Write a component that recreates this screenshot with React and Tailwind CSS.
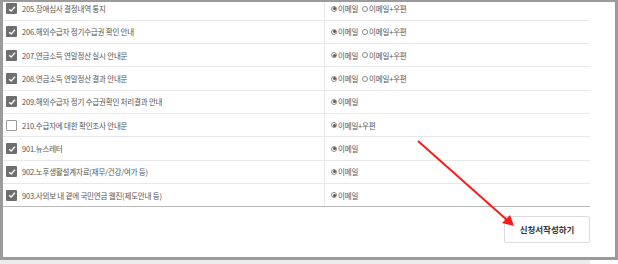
import React from "react";

const rows = [
  { code: "205.장애심사 결정내역 통지", checked: true, both: true },
  { code: "206.해외수급자 정기수급권 확인 안내", checked: true, both: true },
  { code: "207.연금소득 연말정산 실시 안내문", checked: true, both: true },
  { code: "208.연금소득 연말정산 결과 안내문", checked: true, both: true },
  { code: "209.해외수급자 정기 수급권확인 처리결과 안내", checked: true, only: "이메일" },
  { code: "210.수급자에 대한 확인조사 안내문", checked: false, only: "이메일+우편" },
  { code: "901.뉴스레터", checked: true, only: "이메일" },
  { code: "902.노후생활설계자료(재무/건강/여가 등)", checked: true, only: "이메일" },
  { code: "903.사외보 내 곁에 국민연금 웹진(제도안내 등)", checked: true, only: "이메일" },
];

function CheckBox({ checked }) {
  if (!checked) {
    return <span className="w-[11px] h-[11px] shrink-0 rounded-[1px] border border-[#9a9a9a] bg-white" />;
  }
  return (
    <span className="w-[11px] h-[11px] shrink-0 rounded-[1px] bg-[#6e6e6e] flex items-center justify-center">
      <svg width="8" height="8" viewBox="0 0 8 8">
        <path d="M1.2 4.2 L3.2 6.1 L6.9 1.8" fill="none" stroke="#fff" strokeWidth="1.4" />
      </svg>
    </span>
  );
}

function Radio({ on, label }) {
  return (
    <span className="inline-flex items-center">
      <span className="w-[6px] h-[6px] rounded-full border border-[#8a8a8a] bg-white flex items-center justify-center mr-[1px]">
        {on && <span className="w-[3px] h-[3px] rounded-full bg-[#555]" />}
      </span>
      {label}
    </span>
  );
}

export default function App() {
  return (
    <div className="w-[618px] h-[264px] bg-white overflow-hidden relative" style={{ fontFamily: '"Noto Sans CJK KR", "Noto Sans", sans-serif' }}>
      <div className="h-[260px] border-t-2 border-l-[3px] border-r-[3px] border-b-[3px] border-[#9b9b9b] overflow-hidden">
        <div className="w-[587px] -mt-[4.6px]">
          {rows.map((r, i) => (
            <div key={i} className={`flex h-[23.33px] border-b ${i === rows.length - 1 ? "border-[#b8b8b8]" : "border-[#e8e8e8]"}`}>
              <div className="w-[321px] flex items-center pl-[3px] gap-[5px] text-[7.5px] text-[#555] tracking-[-0.2px]">
                <CheckBox checked={r.checked} />
                <span>{r.code}</span>
              </div>
              <div className="flex-1 border-l border-[#e8e8e8] flex items-center pl-[6px] gap-[4px] text-[7.5px] text-[#555] tracking-[-0.2px]">
                {r.both ? (
                  <>
                    <Radio on label="이메일" />
                    <Radio label="이메일+우편" />
                  </>
                ) : (
                  <Radio on label={r.only} />
                )}
              </div>
            </div>
          ))}
          <div className="flex justify-end pt-[9px]">
            <button className="w-[86px] h-[27px] bg-white border border-[#dcdcdc] rounded-[2px] text-[8.5px] font-bold text-[#333]">
              신청서작성하기
            </button>
          </div>
        </div>
      </div>
      <div className="h-[4px] w-[590px] bg-[#ececec]" />
      <svg className="absolute left-0 top-0 pointer-events-none" width="618" height="264">
        <line x1="418" y1="141" x2="507" y2="220" stroke="#ff1a1a" strokeWidth="2" />
        <polygon points="514,226 502,223 510,215" fill="#ff1a1a" />
      </svg>
    </div>
  );
}
